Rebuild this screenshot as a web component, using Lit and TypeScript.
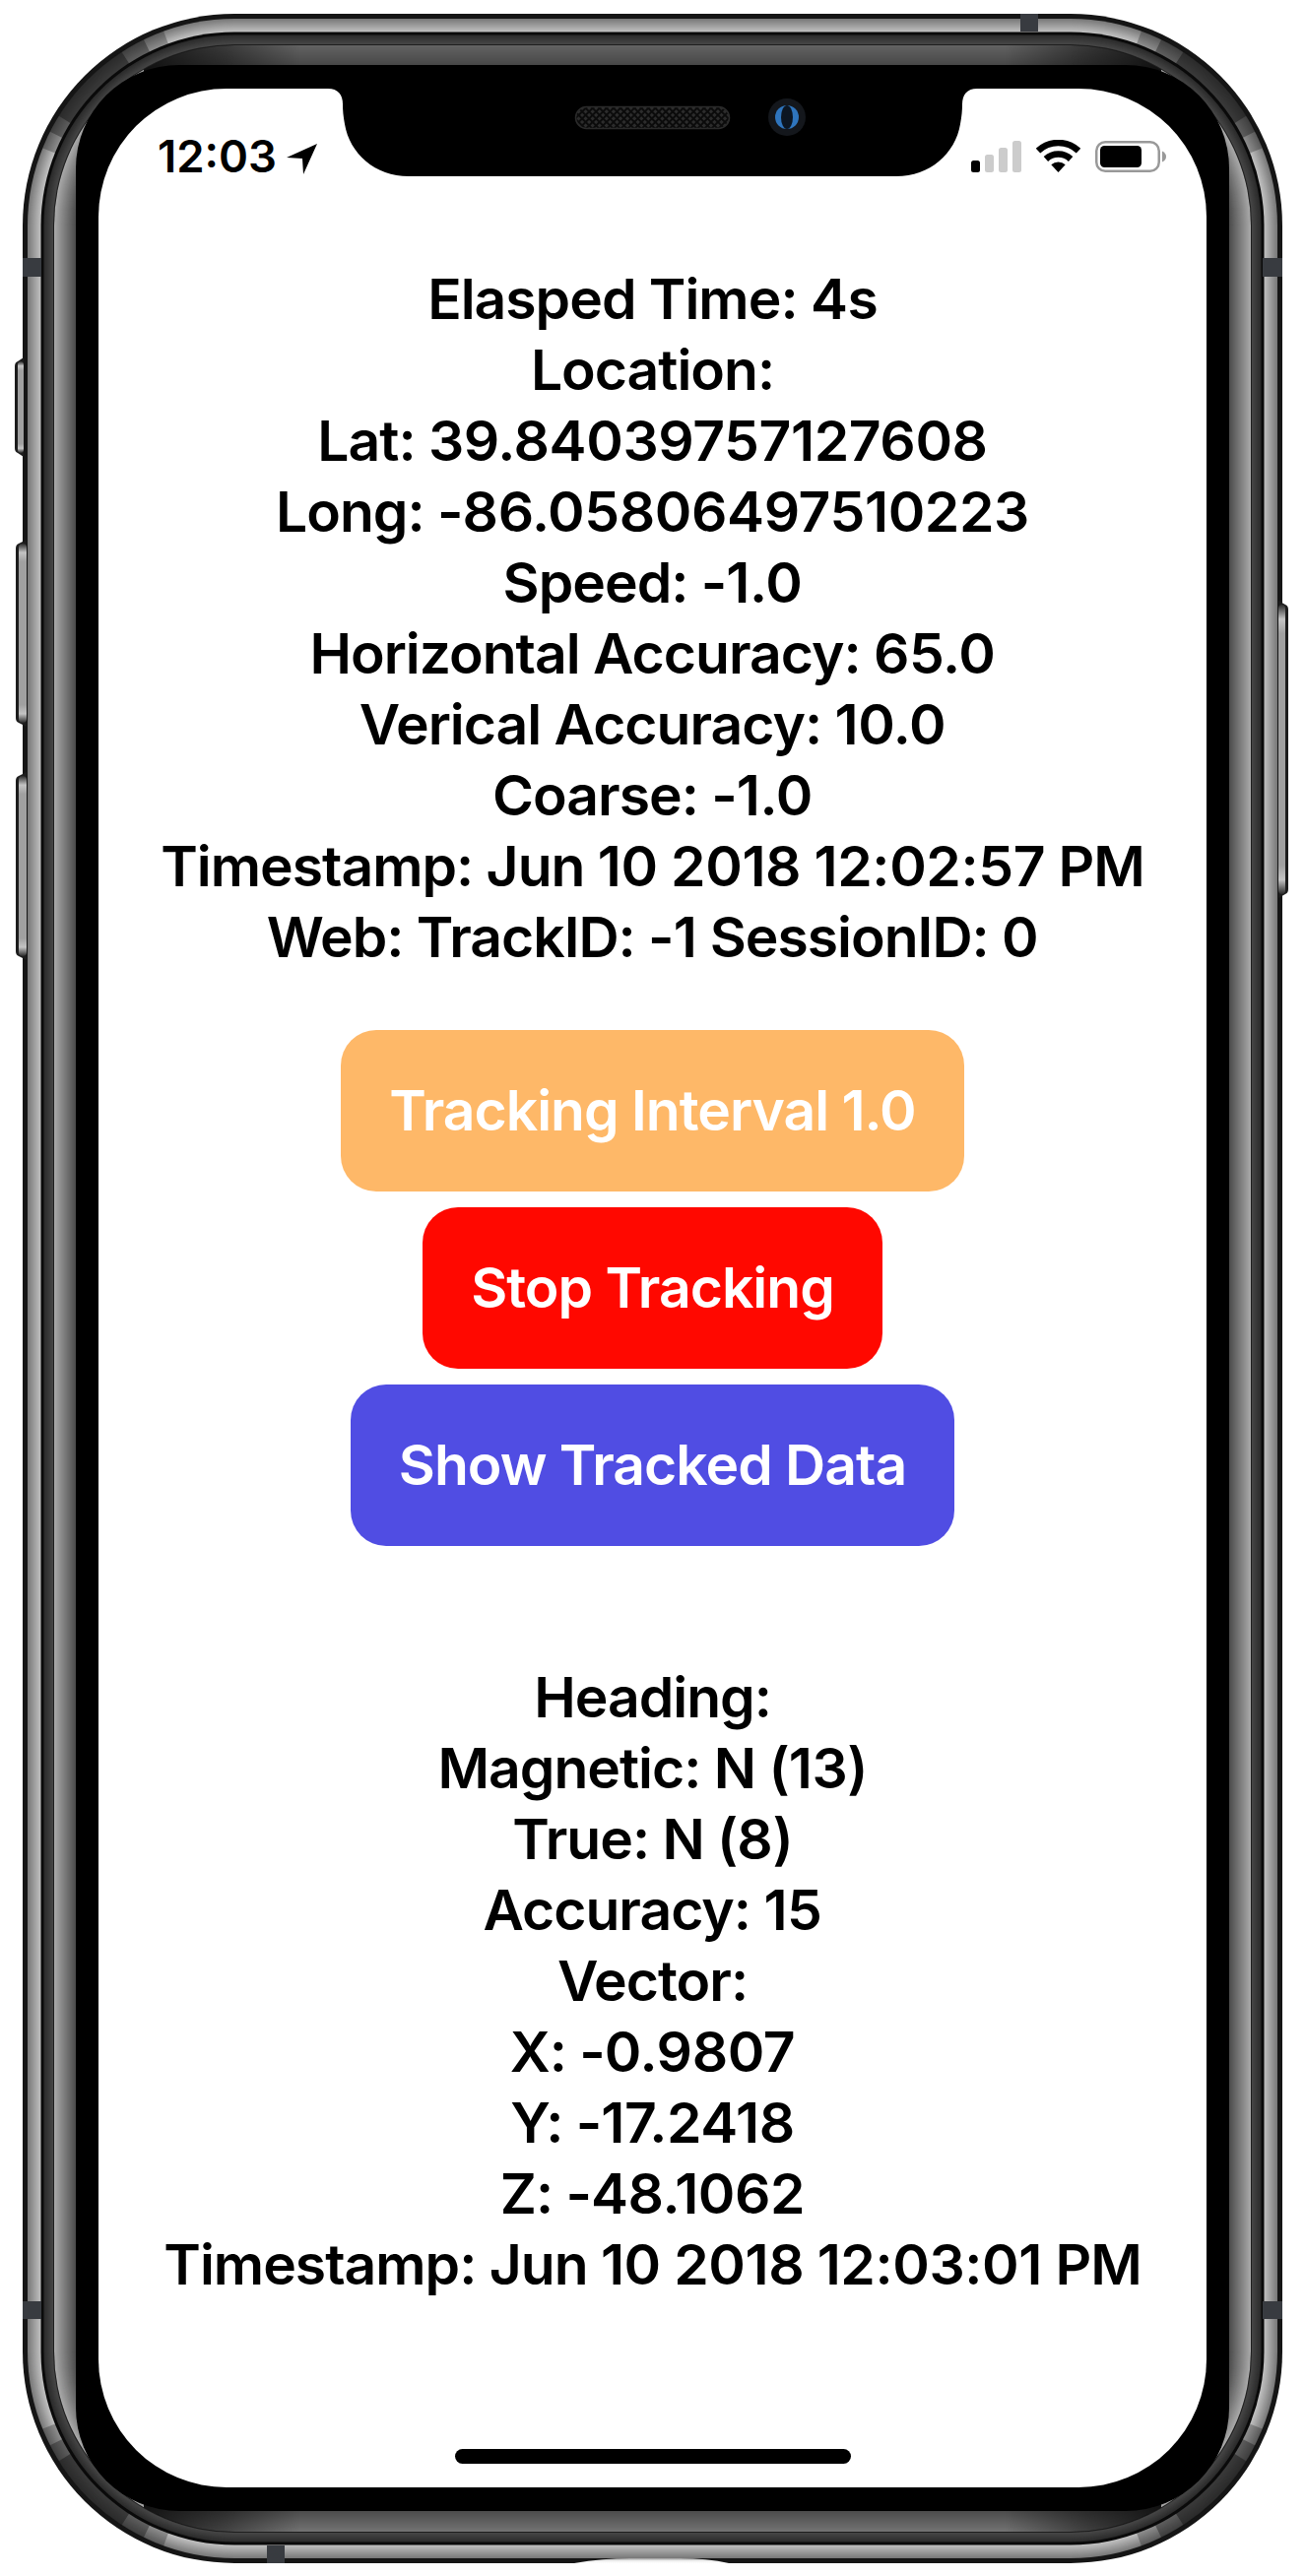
import { LitElement, html, css, svg } from "lit";
import { customElement } from "lit/decorators.js";

const lerp = (a: number, b: number, t: number) => Math.round(a + (b - a) * t);
const grey = (v: number) => `rgb(${v},${v},${v})`;

const ring = (d: number, fill: string) =>
  svg`<rect x=${23 + d} y=${14 + d} width=${1279 - 2 * d} height=${2589 - 2 * d} rx=${Math.max(215 - d, 0)} fill=${fill}></rect>`;

const band = (from: number, to: number, a: number, b: number, step = 1) => {
  const out = [];
  for (let d = from; d < to; d += step) out.push(ring(d, grey(lerp(a, b, (d - from) / (to - from)))));
  return out;
};

const arc = (cx: number, cy: number, sx: number, sy: number, a1: number, a2: number, width: number, op: number) => {
  const r = 203;
  const p = (a: number) => [cx + sx * r * Math.cos((a * Math.PI) / 180), cy + sy * r * Math.sin((a * Math.PI) / 180)];
  const [x1, y1] = p(a1);
  const [x2, y2] = p(a2);
  return svg`<path d=${`M${x1} ${y1}A${r} ${r} 0 0 ${sx * sy > 0 ? 1 : 0} ${x2} ${y2}`} fill="none" stroke="#161616" stroke-width=${width} opacity=${op}></path>`;
};

const corners = () => {
  const out = [];
  for (const [cx, cy, sx, sy] of [
    [238, 229, -1, -1],
    [1087, 229, 1, -1],
    [238, 2388, -1, 1],
    [1087, 2388, 1, 1],
  ]) {
    out.push(arc(cx, cy, sx, sy, 22, 70, 15, 0.3));
    out.push(arc(cx, cy, sx, sy, 27, 64, 15, 0.4));
    out.push(arc(cx, cy, sx, sy, 32, 57, 15, 0.5));
  }
  return out;
};

const sideButton = (x: number, y: number, w: number, h: number, flip: boolean) => {
  const base = flip ? x + w : x;
  const s = flip ? -1 : 1;
  return svg`
    <path d=${`M${base + s * w} ${y}L${base + s * 3} ${y + 4}Q${base} ${y + 5} ${base} ${y + 9}V${y + h - 9}Q${base} ${y + h - 5} ${base + s * 3} ${y + h - 4}L${base + s * w} ${y + h}Z`} fill="#1c1c1c"></path>
    <rect x=${flip ? x : x + 3} y=${y + 4} width=${w - 3} height=${h - 8} rx="4" fill="url(#btn)"></rect>`;
};

const antennas = [
  [1036, 14, 18, 18],
  [23, 262, 19, 19],
  [1282, 262, 20, 19],
  [23, 2337, 19, 18],
  [1282, 2337, 20, 18],
  [271, 2585, 18, 18],
];

const firstLines = [
  "Elasped Time: 4s",
  "Location:",
  "Lat: 39.84039757127608",
  "Long: -86.05806497510223",
  "Speed: -1.0",
  "Horizontal Accuracy: 65.0",
  "Verical Accuracy: 10.0",
  "Coarse: -1.0",
  "Timestamp: Jun 10 2018 12:02:57 PM",
  "Web: TrackID: -1 SessionID: 0",
];

const secondLines = [
  "Heading:",
  "Magnetic: N (13)",
  "True: N (8)",
  "Accuracy: 15",
  "Vector:",
  "X: -0.9807",
  "Y: -17.2418",
  "Z: -48.1062",
  "Timestamp: Jun 10 2018 12:03:01 PM",
];

/* Digit runs are set a little wider than the letters around them. */
const spaced = (line: string) =>
  line.split(/(\d[\d.:]*)/).map((part, i) => (i % 2 ? html`<span class="num">${part}</span>` : part));

@customElement("app-root")
export class AppRoot extends LitElement {
  static styles = css`
    :host {
      display: block;
      width: 1325px;
      height: 2616px;
      background: #fff;
      font-family: Inter, "Liberation Sans", sans-serif;
      color: #000;
    }
    .device {
      position: relative;
      box-sizing: border-box;
      width: 1325px;
      height: 2616px;
      padding: 90px 100px;
    }
    .art {
      position: absolute;
      left: 0;
      top: 0;
    }
    .screen {
      position: relative;
      box-sizing: border-box;
      height: 2436px;
      background: #fff;
      border-radius: 130px;
      overflow: hidden;
      display: flex;
      flex-direction: column;
      align-items: center;
    }
    .notch {
      position: absolute;
      left: 233px;
      top: 0;
    }
    .status {
      align-self: stretch;
      display: flex;
      justify-content: space-between;
      align-items: flex-start;
      padding: 53px 41px 0 60px;
      height: 32px;
      margin-bottom: 93px;
    }
    .time-group {
      display: flex;
      align-items: flex-start;
    }
    .time {
      font-size: 45.5px;
      line-height: 32px;
      font-weight: 600;
    }
    .arrow {
      margin: 3px 0 0 10px;
    }
    .icons {
      display: flex;
      align-items: flex-start;
      gap: 15px;
    }
    .wifi {
      margin-top: -1px;
    }
    .readout {
      font-size: 57px;
      line-height: 72px;
      font-weight: 600;
      letter-spacing: -1px;
      text-align: center;
      white-space: nowrap;
    }
    .num {
      letter-spacing: -0.4px;
    }
    .actions {
      display: flex;
      flex-direction: column;
      align-items: center;
      gap: 16px;
      margin: 58px 0 118px;
    }
    .btn {
      border-radius: 36px;
      padding: 46px 49px;
      color: #fff;
      font-size: 57px;
      line-height: 72px;
      font-weight: 600;
      letter-spacing: -1px;
      white-space: nowrap;
    }
    .orange {
      background: #feb868;
    }
    .red {
      background: #ff0800;
    }
    .blue {
      background: #504de3;
    }
    .indicator {
      width: 402px;
      height: 15px;
      border-radius: 8px;
      background: #000;
      margin-top: auto;
      margin-bottom: 24px;
    }
  `;

  private art() {
    return html`<svg class="art" width="1325" height="2616" viewBox="0 0 1325 2616" aria-hidden="true">
      <defs>
        <linearGradient id="btn" x1="0" y1="0" x2="0" y2="1">
          <stop offset="0" stop-color="#2a2a2a"></stop>
          <stop offset="0.05" stop-color="#c4c4c4"></stop>
          <stop offset="0.1" stop-color="#a0a0a0"></stop>
          <stop offset="0.9" stop-color="#a0a0a0"></stop>
          <stop offset="0.95" stop-color="#c4c4c4"></stop>
          <stop offset="1" stop-color="#2a2a2a"></stop>
        </linearGradient>
        <linearGradient id="fade" gradientUnits="userSpaceOnUse" x1="0" y1="0" x2="1325" y2="0">
          <stop offset="0.11" stop-color="#fff" stop-opacity="0.15"></stop>
          <stop offset="0.23" stop-color="#fff"></stop>
          <stop offset="0.77" stop-color="#fff"></stop>
          <stop offset="0.89" stop-color="#fff" stop-opacity="0.15"></stop>
        </linearGradient>
        <linearGradient id="port" x1="0" y1="0" x2="0" y2="1">
          <stop offset="0" stop-color="#9a9a9a"></stop>
          <stop offset="0.5" stop-color="#eeeeee"></stop>
          <stop offset="1" stop-color="#ffffff"></stop>
        </linearGradient>
        <mask id="fadeMask" maskUnits="userSpaceOnUse" x="0" y="0" width="1325" height="2616">
          <rect width="1325" height="2616" fill="url(#fade)"></rect>
        </mask>
        <clipPath id="sides">
          <rect x="0" y="0" width="146" height="2616"></rect>
          <rect x="1179" y="0" width="146" height="2616"></rect>
        </clipPath>
        <clipPath id="topHalf"><rect x="146" y="0" width="1033" height="1308"></rect></clipPath>
        <clipPath id="bottomHalf"><rect x="146" y="1308" width="1033" height="1308"></rect></clipPath>
        <pattern id="mesh" width="5" height="5" patternUnits="userSpaceOnUse" patternTransform="rotate(45)">
          <rect width="5" height="5" fill="#0b0b0b"></rect>
          <rect width="3" height="3" fill="#2c2c2c"></rect>
        </pattern>
      </defs>

      ${ring(0, "#151515")}
      ${band(5, 18.5, 122, 196)}
      ${corners()}
      ${ring(18.5, "#0a0a0a")}
      ${band(21.5, 31, 44, 72)}
      ${antennas.map(([x, y, w, h]) => svg`<rect x=${x} y=${y} width=${w} height=${h} fill="#383b40"></rect>`)}
      ${ring(31, "#1e1e1e")}
      ${ring(32, "#000")}

      <g clip-path="url(#sides)">${band(32, 54, 168, 72)}</g>
      <g clip-path="url(#topHalf)" mask="url(#fadeMask)">${band(32, 54, 98, 68)}</g>
      <g clip-path="url(#bottomHalf)" mask="url(#fadeMask)">${band(32, 54, 114, 72)}</g>
      <rect x="77" y="66" width="1171" height="2484" rx="105" fill="#000"></rect>

      ${sideButton(15, 363, 9, 101, false)}
      ${sideButton(16, 548, 11, 190, false)}
      ${sideButton(16, 784, 11, 191, false)}
      ${sideButton(1298, 610, 10, 302, true)}

      <path d="M583 2603Q612 2598 640 2598H690Q718 2598 740 2603Z" fill="url(#port)"></path>
    </svg>`;
  }

  private notch() {
    return html`<svg class="notch" width="659" height="89" viewBox="0 0 659 89" aria-hidden="true">
      <path d="M0 0C10 0 15 6 15 16C15 22 15.5 28 17 36C22 66 48 89 82 89H577C611 89 637 66 642 36C643.5 28 644 22 644 16C644 6 649 0 659 0Z" fill="#000"></path>
      <rect x="251.5" y="18.5" width="156" height="22" rx="11" fill="url(#mesh)" stroke="#2a2a2a" stroke-width="1.5"></rect>
      <circle cx="466" cy="29" r="19" fill="#14171c"></circle>
      <circle cx="466" cy="29" r="12" fill="#2f75bd"></circle>
      <ellipse cx="466" cy="29" rx="6" ry="12" fill="#0c1622"></ellipse>
    </svg>`;
  }

  private statusBar() {
    return html`<div class="status">
      <div class="time-group">
        <span class="time">12:03</span>
        <svg class="arrow" width="31" height="31" viewBox="0 0 31 31" aria-hidden="true">
          <path d="M0 14L31 0L17 31L16 15Z" fill="#000"></path>
        </svg>
      </div>
      <div class="icons">
        <svg width="51" height="32" viewBox="0 0 51 32" aria-hidden="true">
          <rect x="0" y="20" width="9" height="12" rx="2.5" fill="#000"></rect>
          <rect x="14" y="14" width="9" height="18" rx="2.5" fill="#ccc"></rect>
          <rect x="28" y="7" width="9" height="25" rx="2.5" fill="#ccc"></rect>
          <rect x="42" y="0" width="9" height="32" rx="2.5" fill="#ccc"></rect>
        </svg>
        <svg class="wifi" width="45" height="33" viewBox="0 0 45 33" aria-hidden="true">
          <path d="M2 11.1A30 30 0 0 1 43 11.1" fill="none" stroke="#000" stroke-width="6.5"></path>
          <path d="M9.9 19.5A18.5 18.5 0 0 1 35.1 19.5" fill="none" stroke="#000" stroke-width="6.5"></path>
          <path d="M15.3 25.3A10.5 10.5 0 0 1 29.7 25.3L22.5 33Z" fill="#000"></path>
        </svg>
        <svg width="72" height="32" viewBox="0 0 72 32" aria-hidden="true">
          <rect x="1.25" y="1.25" width="63.5" height="29.5" rx="9" fill="none" stroke="#999" stroke-width="2.5"></rect>
          <rect x="5" y="5" width="42" height="22" rx="4.5" fill="#000"></rect>
          <path d="M68 10.5Q72 12.5 72 16Q72 19.5 68 21.5Z" fill="#999"></path>
        </svg>
      </div>
    </div>`;
  }

  render() {
    return html`<div class="device">
      ${this.art()}
      <main class="screen">
        ${this.notch()}
        ${this.statusBar()}
        <div class="readout">${firstLines.map((l) => html`<div>${spaced(l)}</div>`)}</div>
        <div class="actions">
          <div class="btn orange">Tracking Interval 1.0</div>
          <div class="btn red">Stop Tracking</div>
          <div class="btn blue">Show Tracked Data</div>
        </div>
        <div class="readout">${secondLines.map((l) => html`<div>${spaced(l)}</div>`)}</div>
        <div class="indicator"></div>
      </main>
    </div>`;
  }
}
